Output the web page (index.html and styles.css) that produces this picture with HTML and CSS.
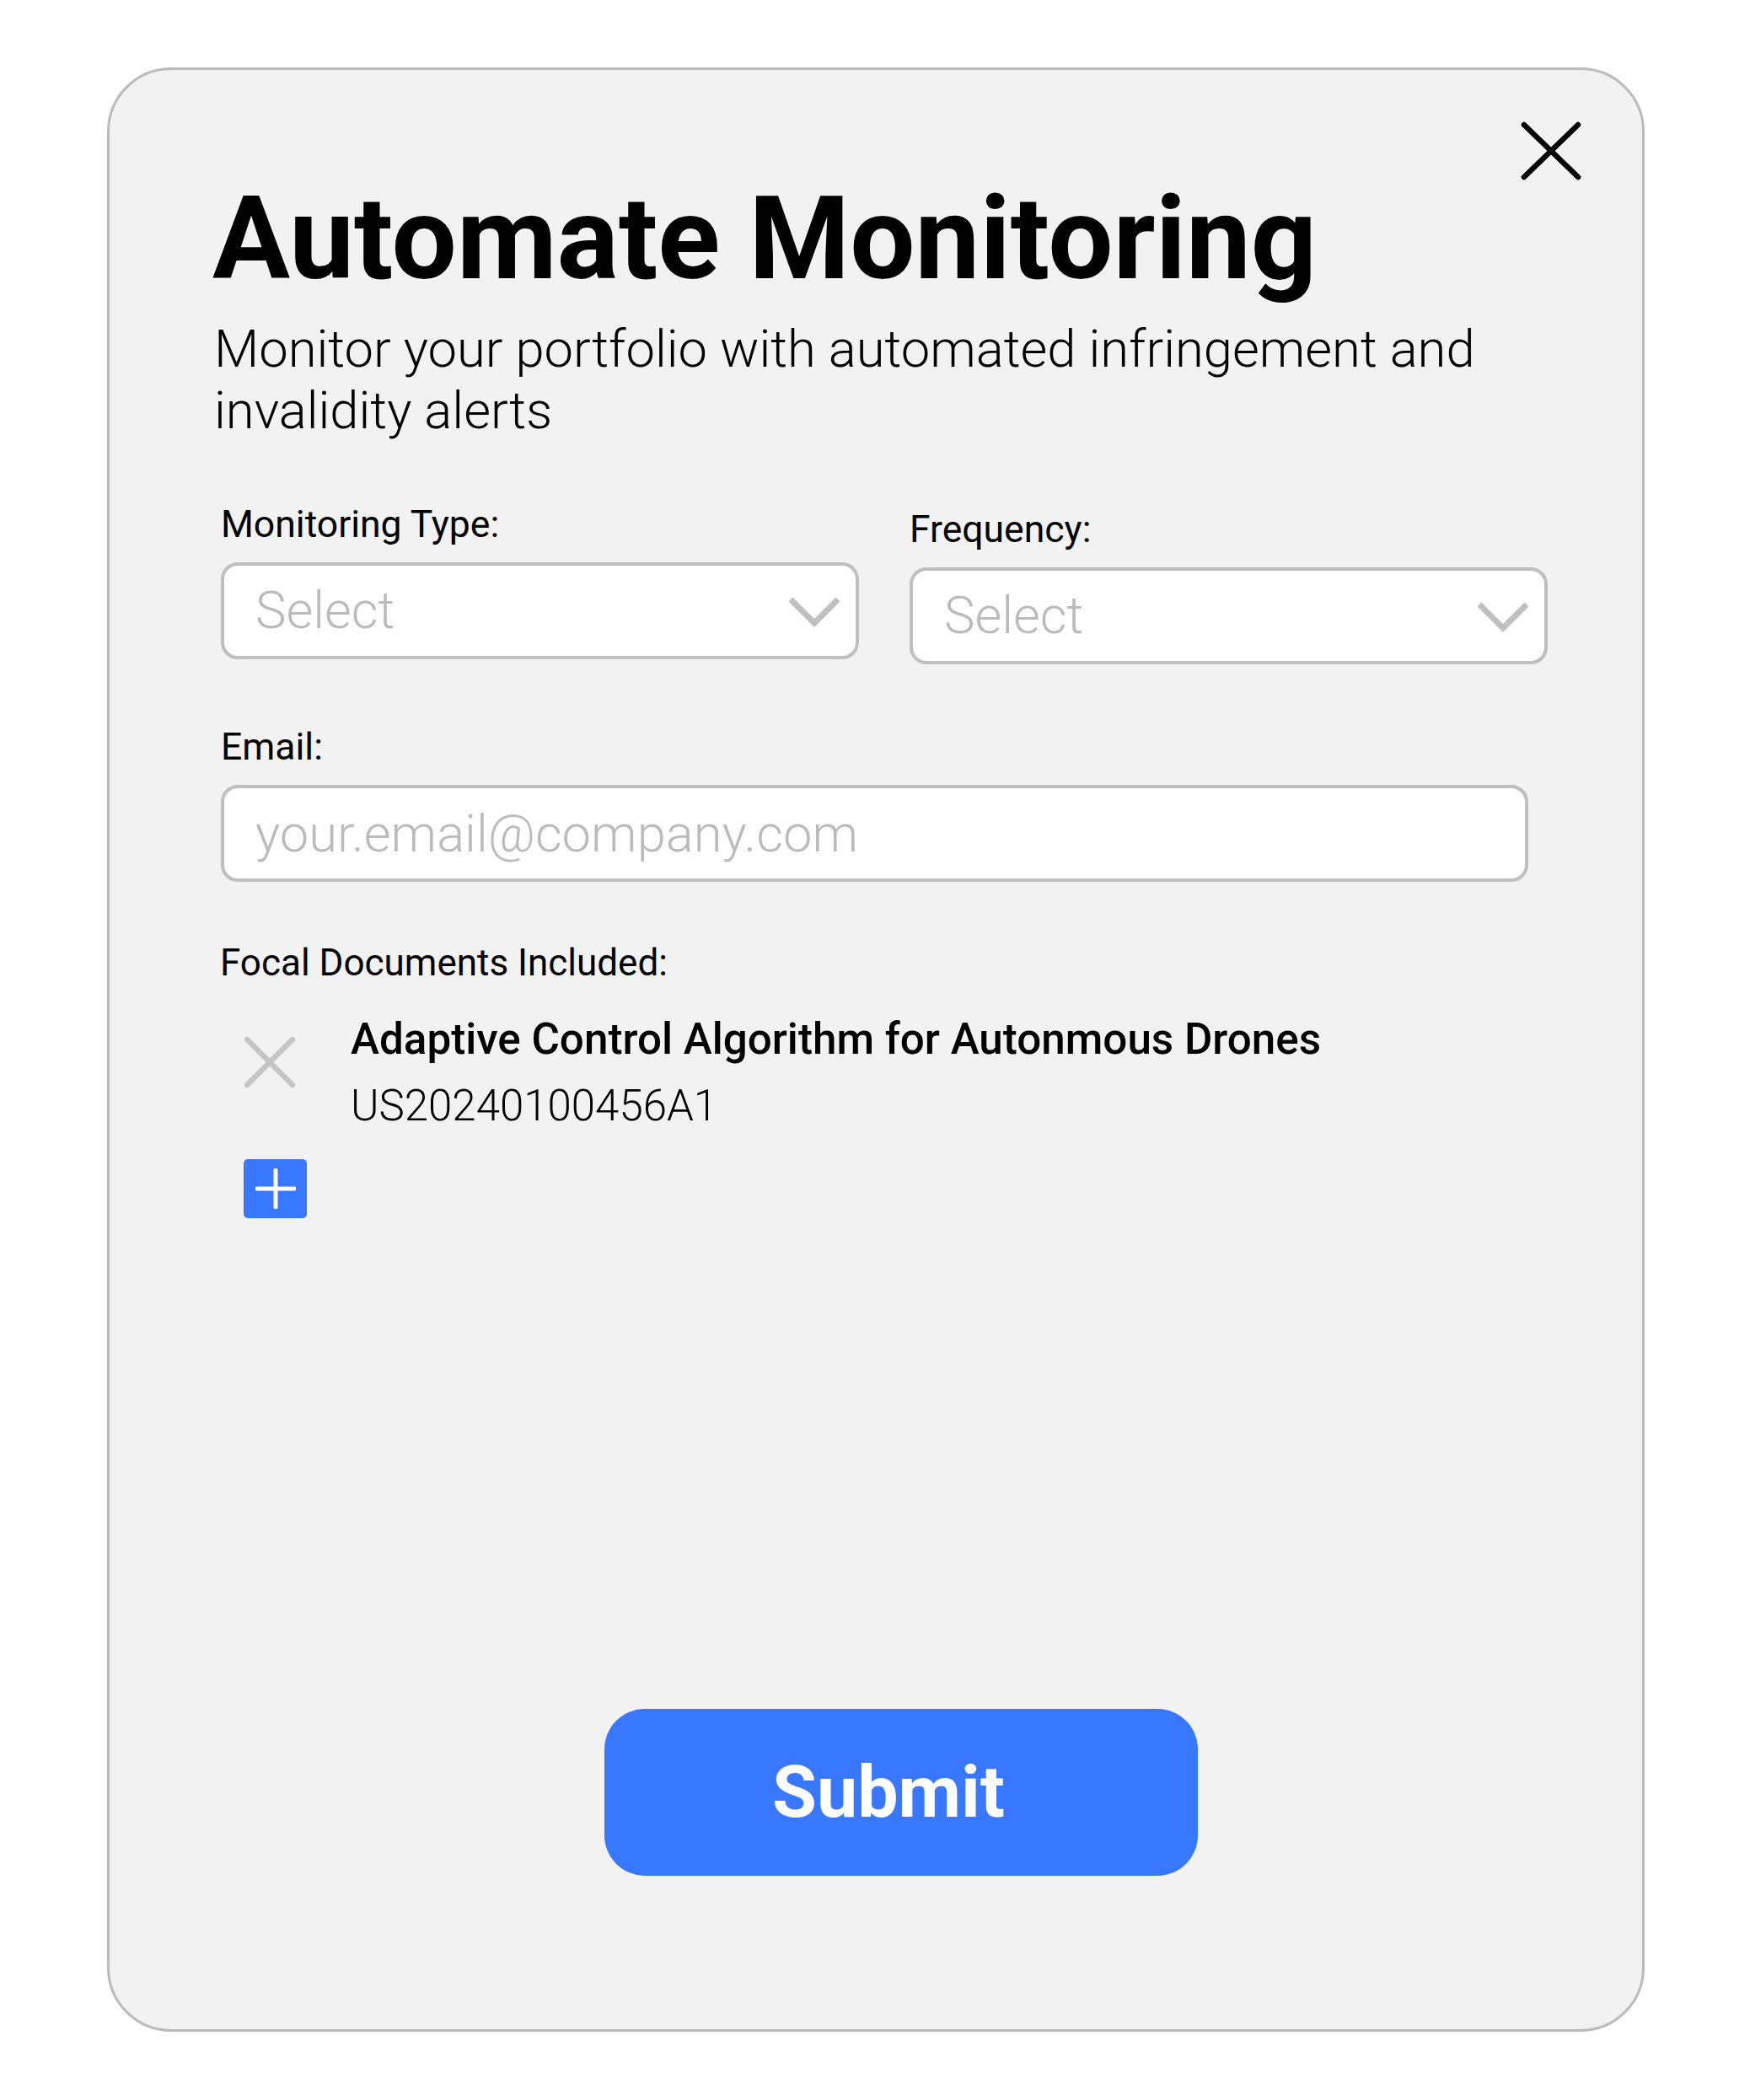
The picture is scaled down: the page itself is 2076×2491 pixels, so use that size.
FILE: index.html
```html
<!DOCTYPE html>
<html lang="en">
<head>
<meta charset="utf-8">
<title>Automate Monitoring</title>
<link rel="stylesheet" href="styles.css">
</head>
<body>
<div class="page">
  <div class="card">
    <button class="close" type="button" aria-label="Close">
      <svg width="72" height="72" viewBox="0 0 72 72"><path d="M4 5 L68 67 M68 5 L4 67" fill="none" stroke="#000" stroke-width="6.5" stroke-linecap="round"/></svg>
    </button>
    <h1 class="title">Automate Monitoring</h1>
    <p class="subtitle">Monitor your portfolio with automated infringement and invalidity alerts</p>

    <div class="form">
      <div class="selects">
        <div class="field">
          <div class="label">Monitoring Type:</div>
          <div class="select">
            <span class="placeholder">Select</span>
            <svg class="chevron" width="66" height="40" viewBox="0 0 66 40"><path d="M5 6 L33 34 L61 6" fill="none" stroke="#c0c0c0" stroke-width="7"/></svg>
          </div>
        </div>
        <div class="field field-offset">
          <div class="label">Frequency:</div>
          <div class="select">
            <span class="placeholder">Select</span>
            <svg class="chevron" width="66" height="40" viewBox="0 0 66 40"><path d="M5 6 L33 34 L61 6" fill="none" stroke="#c0c0c0" stroke-width="7"/></svg>
          </div>
        </div>
      </div>

      <div class="email-field">
        <div class="label">Email:</div>
        <input class="input" type="email" placeholder="your.email@company.com">
      </div>

      <div class="docs">
        <div class="label label-docs">Focal Documents Included:</div>
        <div class="doc">
          <svg class="doc-remove" width="60" height="60" viewBox="0 0 60 60"><path d="M3 3 L57 57 M57 3 L3 57" fill="none" stroke="#c4c4c4" stroke-width="6.5" stroke-linecap="round"/></svg>
          <div class="doc-text">
            <div class="doc-title">Adaptive Control Algorithm for Autonmous Drones</div>
            <div class="doc-id">US20240100456A1</div>
          </div>
        </div>
        <button class="add" type="button" aria-label="Add document">
          <svg width="48" height="48" viewBox="0 0 48 48"><path d="M24 2 L24 46 M2 24 L46 24" fill="none" stroke="#fff" stroke-width="5" stroke-linecap="round"/></svg>
        </button>
      </div>
    </div>

    <button class="submit" type="button">Submit</button>
  </div>
</div>
</body>
</html>
```
FILE: styles.css
```css
* {
  box-sizing: border-box;
}

body {
  margin: 0;
  background: #ffffff;
  font-family: Roboto, "Liberation Sans", sans-serif;
  color: #000;
}

.page {
  padding: 80px 0 0 127px;
}

.card {
  position: relative;
  width: 1824px;
  height: 2330px;
  background: #f2f2f2;
  border: 3px solid #bbbbbb;
  border-radius: 76px;
  padding: 120px 0 0 122px;
}

.close {
  position: absolute;
  top: 60px;
  right: 72px;
  width: 72px;
  height: 72px;
  padding: 0;
  border: 0;
  background: none;
  display: block;
}

.close svg {
  display: block;
}

.title {
  margin: 0;
  font-size: 137px;
  font-weight: 700;
  line-height: 160px;
}

.subtitle {
  margin: 15px 0 0 2px;
  max-width: 1580px;
  font-size: 61.5px;
  font-weight: 300;
  line-height: 73px;
}

.form {
  margin: 72px 0 0 10px;
}

.selects {
  display: flex;
  align-items: flex-start;
  gap: 60px;
}

.field {
  width: 757px;
}

.field-offset {
  margin-top: 6px;
}

.label {
  font-size: 44.5px;
  font-weight: 400;
  line-height: 52px;
}

.label-docs {
  font-size: 44px;
  margin-left: -1px;
}

.select {
  margin-top: 19px;
  height: 115px;
  background: #fff;
  border: 4px solid #bfbfbf;
  border-radius: 20px;
  display: flex;
  align-items: center;
  justify-content: space-between;
  padding: 0 16px 0 37px;
}

.placeholder {
  font-size: 61.5px;
  font-weight: 300;
  line-height: 73px;
  color: #bbbbbb;
}

.chevron {
  display: block;
}

.email-field {
  margin-top: 72px;
  width: 1551px;
}

.input {
  display: block;
  width: 100%;
  margin-top: 19px;
  height: 115px;
  background: #fff;
  border: 4px solid #bfbfbf;
  border-radius: 20px;
  padding: 0 20px 0 37px;
  font-family: inherit;
  font-size: 61.5px;
  font-weight: 300;
  color: #000;
  outline: none;
}

.input::placeholder {
  color: #bbbbbb;
  opacity: 1;
}

.docs {
  margin-top: 70px;
}

.doc {
  display: flex;
  align-items: flex-start;
  margin-top: 36px;
}

.doc-remove {
  display: block;
  flex: none;
  margin: 26px 0 0 28px;
}

.doc-text {
  margin-left: 66px;
}

.doc-title {
  font-size: 51.2px;
  font-weight: 500;
  line-height: 58px;
}

.doc-id {
  margin-top: 20px;
  font-size: 51px;
  font-weight: 300;
  line-height: 60px;
}

.add {
  margin: 33px 0 0 27px;
  width: 75px;
  height: 70px;
  padding: 0;
  border: 0;
  border-radius: 5px;
  background: #3877ff;
  display: flex;
  align-items: center;
  justify-content: center;
}

.add svg {
  display: block;
}

.submit {
  display: block;
  margin: 582px 0 0 465px;
  width: 704px;
  height: 198px;
  padding: 0 30px 0 0;
  border: 0;
  border-radius: 48px;
  background: #3877ff;
  color: #fff;
  font-family: inherit;
  font-size: 86px;
  font-weight: 700;
  line-height: 100px;
}
```
